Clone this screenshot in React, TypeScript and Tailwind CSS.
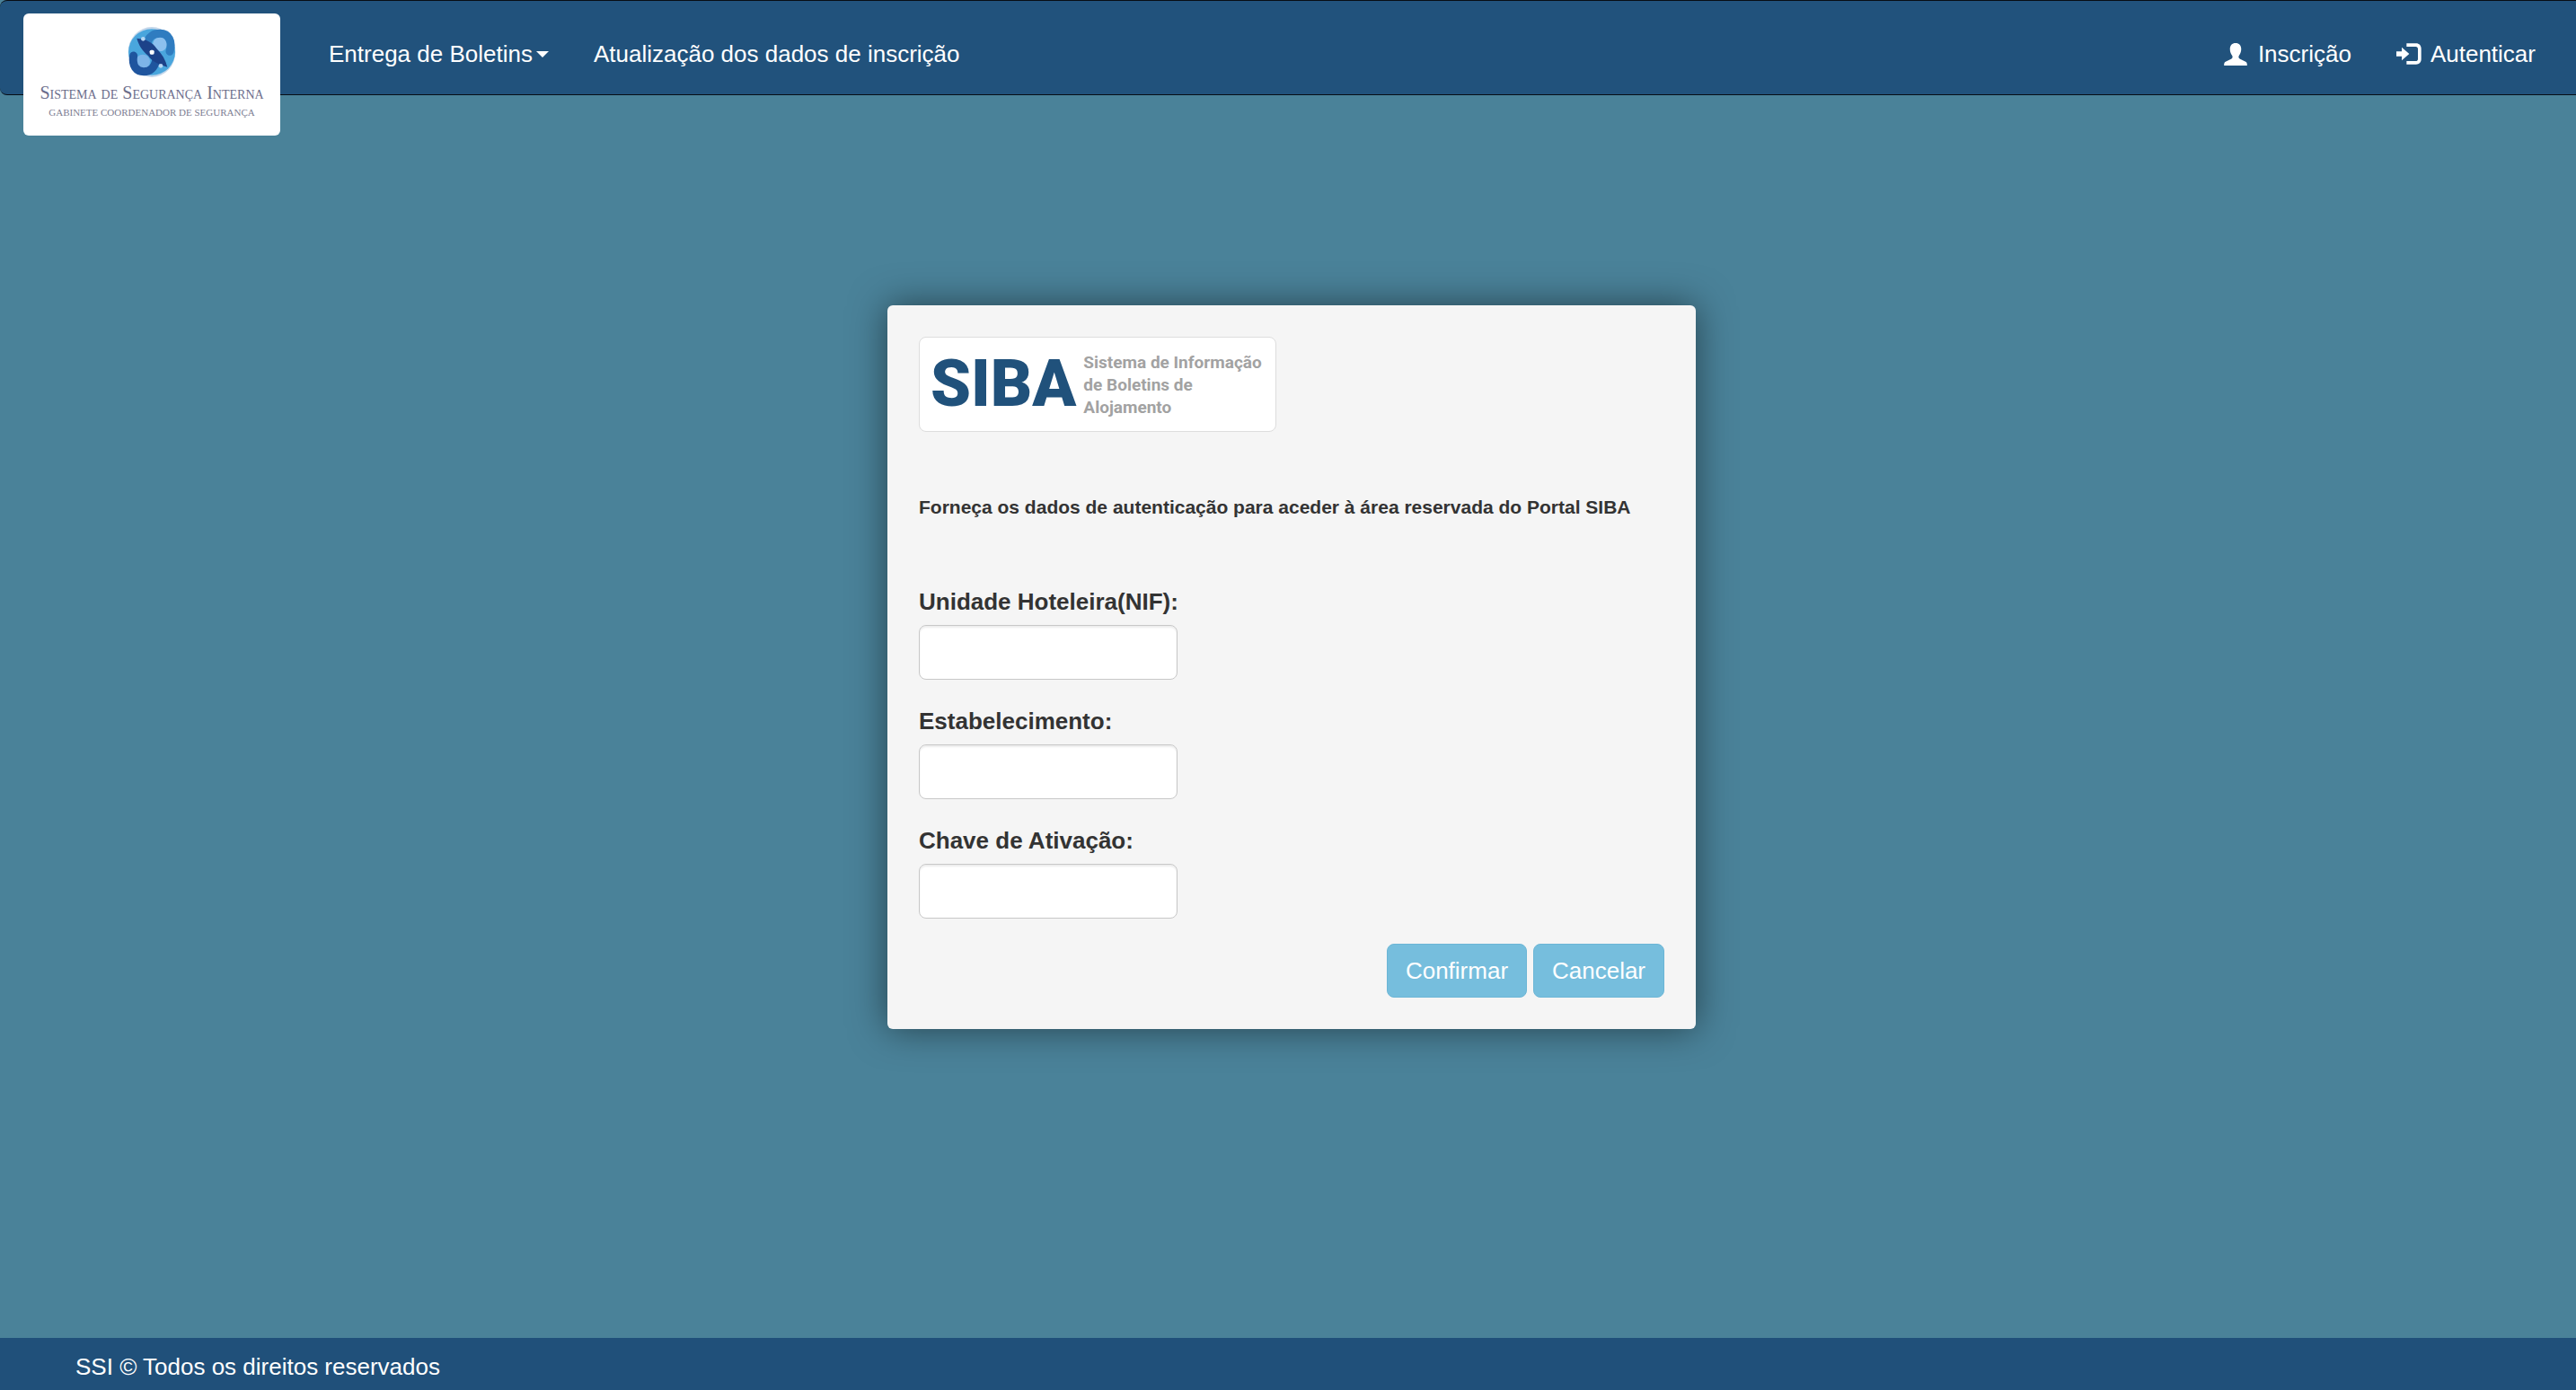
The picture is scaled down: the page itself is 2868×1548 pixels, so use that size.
type FieldProps = {
  id: string
  label: string
  type?: string
}

function UserIcon() {
  return (
    <svg viewBox="0 0 78 76" className="h-[25px] w-[26px] fill-white" aria-hidden="true">
      <path d="M39 0C27 0 20 8 20 20c0 9 2 15 7 22 3 4 2 9-2 11L5 63c-4 2-5 5-5 13h78c0-8-1-11-5-13L53 53c-4-2-5-7-2-11 5-7 7-13 7-22C58 8 51 0 39 0z" />
    </svg>
  )
}

function LoginIcon() {
  return (
    <svg viewBox="0 0 84 70" className="h-[24px] w-[28px] fill-white" aria-hidden="true">
      <path d="M34 0h32c10 0 17 7 17 17v36c0 10-7 17-17 17H34V59h31c4 0 7-3 7-7V18c0-4-3-7-7-7H34z" />
      <path d="M0 27h18V13l25 22-25 22V43H0z" />
    </svg>
  )
}

function Emblem() {
  return (
    <svg viewBox="0 0 160 168" className="h-[56px] w-[54px]" aria-hidden="true">
      <ellipse cx="80" cy="84" rx="79" ry="84" fill="#c3d6ea" />
      <ellipse cx="80" cy="84" rx="78" ry="77" fill="#4aa6dd" />
      <ellipse cx="107" cy="58" rx="24" ry="24" fill="#8cc0ee" />
      <ellipse cx="50" cy="116" rx="24" ry="24" fill="#7db4e8" />
      <path
        d="M64 58C68 30 88 22 108 22c28 0 42 26 32 60"
        fill="none"
        stroke="#2f7cc0"
        strokeWidth="27"
        strokeLinecap="round"
      />
      <path
        d="M19 96c-6 34 10 53 34 53 26 0 36-16 42-38"
        fill="none"
        stroke="#1f559e"
        strokeWidth="27"
        strokeLinecap="round"
      />
      <path d="M92 76c20 6 38 14 48 34-6 24-26 42-50 44 12-10 18-24 16-36z" fill="#4aa6dd" />
      <path d="M68 94C46 88 26 74 16 54 24 34 42 18 62 12 52 24 46 36 50 50z" fill="#4aa6dd" />
      <path
        d="M30 38c30 2 54 14 66 34 18 18 30 38 36 62-30-8-52-20-64-38C48 80 36 60 30 38z"
        fill="#1c4289"
      />
      <circle cx="51" cy="40" r="7" fill="#b5d6f3" />
      <circle cx="110" cy="130" r="7" fill="#b5d6f3" />
      <rect x="73" y="77" width="15" height="15" rx="5" fill="#fff" />
    </svg>
  )
}

function Navbar() {
  return (
    <header className="relative flex h-[106px] items-start rounded-l-lg border-y border-[#080d14] bg-[#21527c] pr-[45px] pl-[26px] text-white">
      <a
        href="#"
        className="mt-[14px] flex h-[136px] w-[286px] shrink-0 flex-col items-center rounded-md bg-white pt-[15px] font-['Liberation_Serif',serif] whitespace-nowrap"
      >
        <Emblem />
        <span className="mt-1.5 text-[20px] leading-[22px] text-[#6c6e8c] [font-variant:small-caps]">
          Sistema de Segurança Interna
        </span>
        <span className="mt-1 text-[11px] leading-[14px] text-[#7c7d92]">GABINETE COORDENADOR DE SEGURANÇA</span>
      </a>

      <nav className="flex flex-1 items-center pt-[41px] leading-[36px]">
        <button type="button" className="ml-[54px] flex items-center">
          Entrega de Boletins
          <svg viewBox="0 0 14 7" className="ml-1 h-[7px] w-[14px] fill-white" aria-hidden="true">
            <path d="M0 0h14L7 7z" />
          </svg>
        </button>
        <a href="#" className="ml-[50px]">
          Atualização dos dados de inscrição
        </a>
        <a href="#" className="ml-auto flex items-center gap-3">
          <UserIcon />
          Inscrição
        </a>
        <a href="#" className="ml-[50px] flex items-center gap-[10px]">
          <LoginIcon />
          Autenticar
        </a>
      </nav>
    </header>
  )
}

function Field({ id, label, type = "text" }: FieldProps) {
  return (
    <div className="mb-7 flex flex-col gap-2">
      <label htmlFor={id} className="leading-[36px] font-bold">
        {label}
      </label>
      <input
        id={id}
        name={id}
        type={type}
        className="h-[61px] w-[288px] rounded-lg border border-[#c8c8c8] bg-white px-6 shadow-[inset_0_2px_2px_rgba(0,0,0,0.075)]"
      />
    </div>
  )
}

function SibaLogo() {
  return (
    <div className="flex h-[106px] w-[398px] items-center gap-2 rounded-lg border border-[#dddddd] bg-white pl-3 font-[Roboto,sans-serif] font-bold whitespace-nowrap">
      <span className="text-[72px] leading-[90px] font-black text-[#20517b]">SIBA</span>
      <span className="text-[19px] leading-[25px] text-[#a2a2a2]">
        Sistema de Informação
        <br />
        de Boletins de
        <br />
        Alojamento
      </span>
    </div>
  )
}

export default function App() {
  return (
    <div className="flex min-h-screen flex-col bg-[#4a8299] font-['Liberation_Sans',Arial,sans-serif] text-[26px] text-[#333333]">
      <Navbar />

      <main className="flex flex-1 justify-center pt-[234px] pb-12 pl-2">
        <form className="w-[900px] self-start rounded-md bg-[#f5f5f5] p-[35px] shadow-[0_0_40px_rgba(0,0,0,0.5)]">
          <SibaLogo />
          <h1 className="mt-[72px] mb-[75px] text-[21px] leading-[24px] font-bold">
            Forneça os dados de autenticação para aceder à área reservada do Portal SIBA
          </h1>

          <Field id="nif" label="Unidade Hoteleira(NIF):" />
          <Field id="estabelecimento" label="Estabelecimento:" />
          <Field id="chave" label="Chave de Ativação:" type="password" />

          <div className="flex justify-end gap-[7px] text-white">
            <button type="button" className="h-[60px] w-[156px] rounded-lg border border-[#6cb6d6] bg-[#76bedd]">
              Confirmar
            </button>
            <button type="button" className="h-[60px] w-[146px] rounded-lg border border-[#6cb6d6] bg-[#76bedd]">
              Cancelar
            </button>
          </div>
        </form>
      </main>

      <footer className="h-[58px] bg-[#20507a] px-[84px] pt-[14px] leading-[36px] text-white">
        SSI © Todos os direitos reservados
      </footer>
    </div>
  )
}
